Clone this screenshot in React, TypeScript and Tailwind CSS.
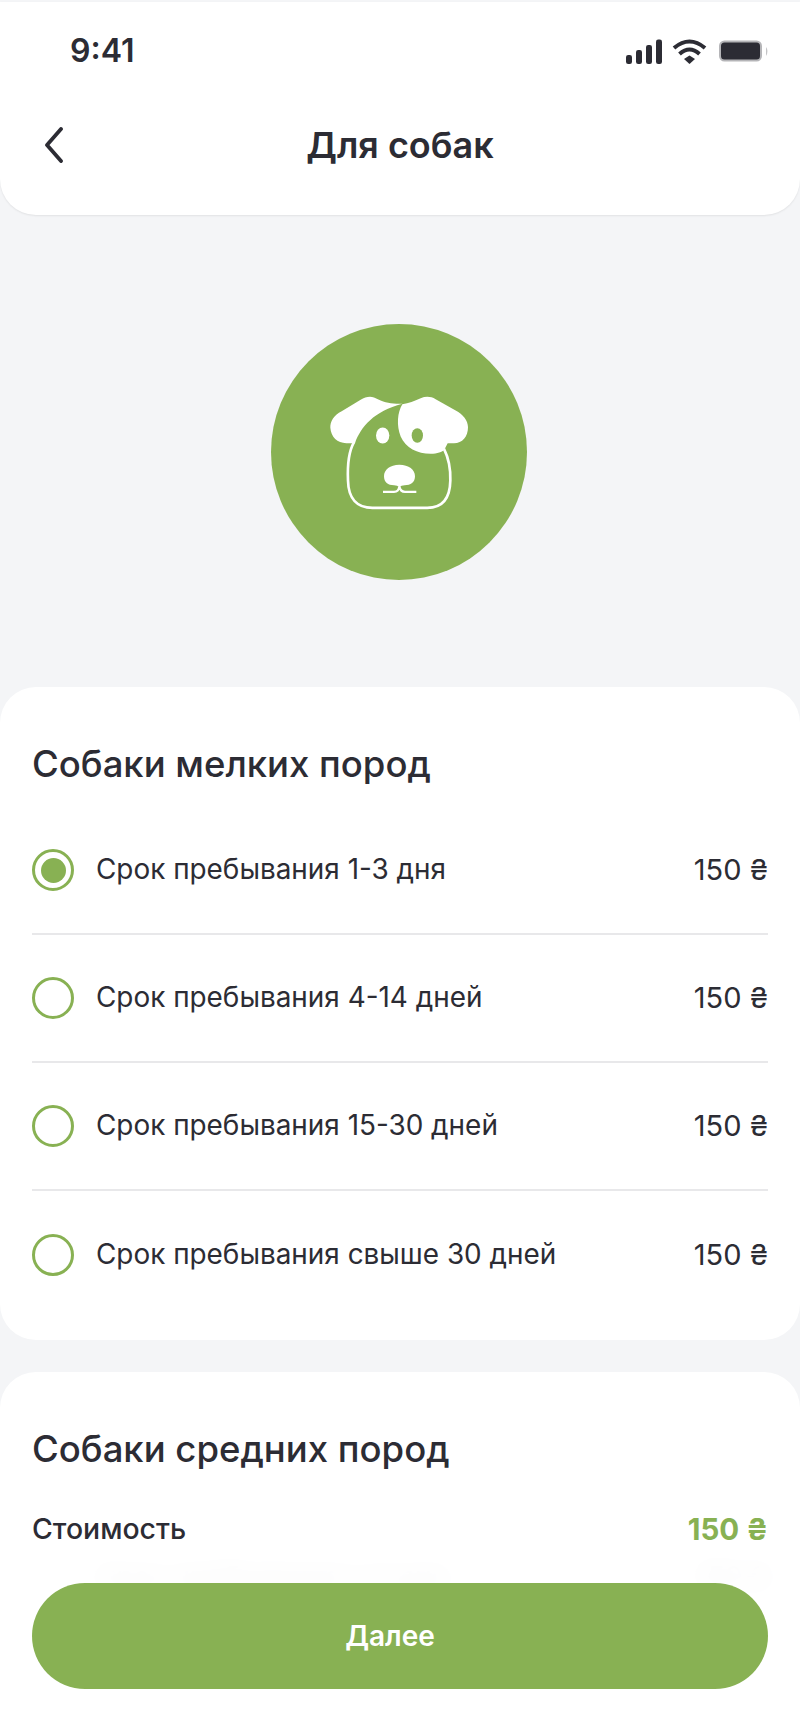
import React from "react";

const rows = ["Срок пребывания 1-3 дня", "Срок пребывания 4-14 дней", "Срок пребывания 15-30 дней", "Срок пребывания свыше 30 дней"];

function StatusIcons() {
  return (
    <svg width="144" height="26" viewBox="0 0 144 26" className="block">
      <rect x="0" y="17" width="6" height="9" rx="2.2" fill="#2c2c34" />
      <rect x="10" y="12" width="6" height="14" rx="2.2" fill="#2c2c34" />
      <rect x="20" y="7" width="6" height="19" rx="2.2" fill="#2c2c34" />
      <rect x="30" y="1.500" width="6" height="24.500" rx="2.200" fill="#2c2c34" />
      <path d="M48 10 Q63.500 -3 79 10" fill="none" stroke="#2c2c34" strokeWidth="4" />
      <path d="M53.500 16 Q63.500 7 73.500 16" fill="none" stroke="#2c2c34" strokeWidth="4" />
      <path d="M58 21 L63.500 17.500 L69 21 L63.500 26 Z" fill="#2c2c34" />
      <rect x="94" y="3.500" width="41" height="19" rx="4.500" fill="#2c2c34" stroke="#b5b5b8" strokeWidth="2" />
      <path d="M140 9 Q143 13 140 18 Z" fill="#c4c4c6" />
    </svg>
  );
}

function DogIcon() {
  return (
    <svg width="140" height="117" viewBox="210 251 420 350" className="block">
      <path d="M285 395 C268 425 265 465 267 510 C268 565 295 592 340 592 L505 592 C550 592 573 565 574 510 C575 475 570 445 555 415" fill="none" stroke="#fff" strokeWidth="8" />
      <path d="M345 261 C332 256 318 260 305 268 L248 302 C225 314 213 332 214 352 C216 380 235 398 262 398 L288 398 C305 350 345 302 430 280 C405 280 385 279 365 270 Z" fill="#fff" />
      <path d="M430 281 C415 305 412 345 425 378 C440 412 475 430 515 430 C535 430 550 425 556 418 L566 398 L585 398 C610 398 627 378 627 350 C627 330 612 312 590 300 L530 266 C515 257 500 257 485 263 C465 272 450 277 430 281 Z" fill="#fff" />
      <ellipse cx="475" cy="375" rx="17" ry="22" fill="#88b153" />
      <ellipse cx="371" cy="375" rx="20" ry="24" fill="#fff" />
      <path d="M421 463 C450 463 468 478 468 497 C468 515 455 524 437 524 C430 524 425 526 421 530 C417 526 412 524 405 524 C387 524 375 515 375 497 C375 478 393 463 421 463 Z" fill="#fff" />
      <path d="M372 544 L405 544 C415 544 420 538 421 528 C423 538 428 544 438 544 L472 544" fill="none" stroke="#fff" strokeWidth="7" />
    </svg>
  );
}

export default function App() {
  return (
    <div className="relative h-[1733px] w-[800px] overflow-hidden bg-[#f4f5f7] pt-[2px] font-['Inter',sans-serif] text-[#2c2c34]">
      <header className="h-[213px] rounded-b-[36px] bg-white shadow-[0_1px_2px_rgba(0,0,0,0.08)]">
        <div className="flex h-[88px] items-center justify-between pt-[10px] pl-[70px] pr-[30px]">
          <span className="text-[32px] font-semibold leading-none">9:41</span>
          <StatusIcons />
        </div>
        <div className="relative flex h-[110px] items-center justify-center">
          <svg width="22" height="36" viewBox="0 0 22 36" className="absolute left-[43px] top-[37px]">
            <path d="M18 2 L4 18 L18 34" fill="none" stroke="#2c2c34" strokeWidth="3.800" strokeLinecap="round" strokeLinejoin="round" />
          </svg>
          <h1 className="text-[36px] font-semibold leading-none">Для собак</h1>
        </div>
      </header>

      <div className="flex justify-center pt-[109px] pb-[107px] pr-[2px]">
        <div className="flex h-[256px] w-[256px] items-center justify-center rounded-full bg-[#88b153]">
          <DogIcon />
        </div>
      </div>

      <section className="h-[653px] rounded-[36px] bg-white px-[32px]">
        <h2 className="pt-[55px] text-[36.5px] font-medium leading-[44px]">Собаки мелких пород</h2>
        <div className="mt-[21px]">
          {rows.map((label, i) => (
            <div key={label} className={`flex h-[128px] items-center ${i < 3 ? "border-b-2 border-[#e8e8ea]" : ""}`}>
              <div className="flex h-[42px] w-[42px] shrink-0 items-center justify-center rounded-full border-[3px] border-[#88b153]">
                {i === 0 && <div className="h-[25px] w-[25px] rounded-full bg-[#88b153]" />}
              </div>
              <span className="ml-[22px] flex-1 text-[27.9px] leading-none">{label}</span>
              <span className="pb-[2px] text-[29px] leading-none">150 ₴</span>
            </div>
          ))}
        </div>
      </section>

      <section className="mt-[32px] h-[400px] rounded-[36px] bg-white px-[32px]">
        <h2 className="pt-[55px] text-[36.5px] font-medium leading-[44px]">Собаки средних пород</h2>
        <div className="mt-[40px] flex items-center justify-between">
          <span className="text-[28.4px] font-medium leading-[36px]">Стоимость</span>
          <span className="text-[29.5px] font-bold leading-[36px] text-[#88b153]">150 ₴</span>
        </div>
        <div className="mt-[12px] flex items-center justify-between">
          <span className="pl-[64px] text-[28px] leading-[36px]">Срок пребывания 1-3 дня</span>
          <span className="text-[28px] leading-[36px]">150 ₴</span>
        </div>
      </section>

      <div className="absolute inset-x-0 bottom-0 h-[185px] bg-white/95 px-[32px] pt-[35px] backdrop-blur-md">
        <button className="flex h-[106px] w-full items-center justify-center rounded-full bg-[#88b153] pr-[20px] text-[28px] font-semibold text-white">
          Далее
        </button>
      </div>
    </div>
  );
}
